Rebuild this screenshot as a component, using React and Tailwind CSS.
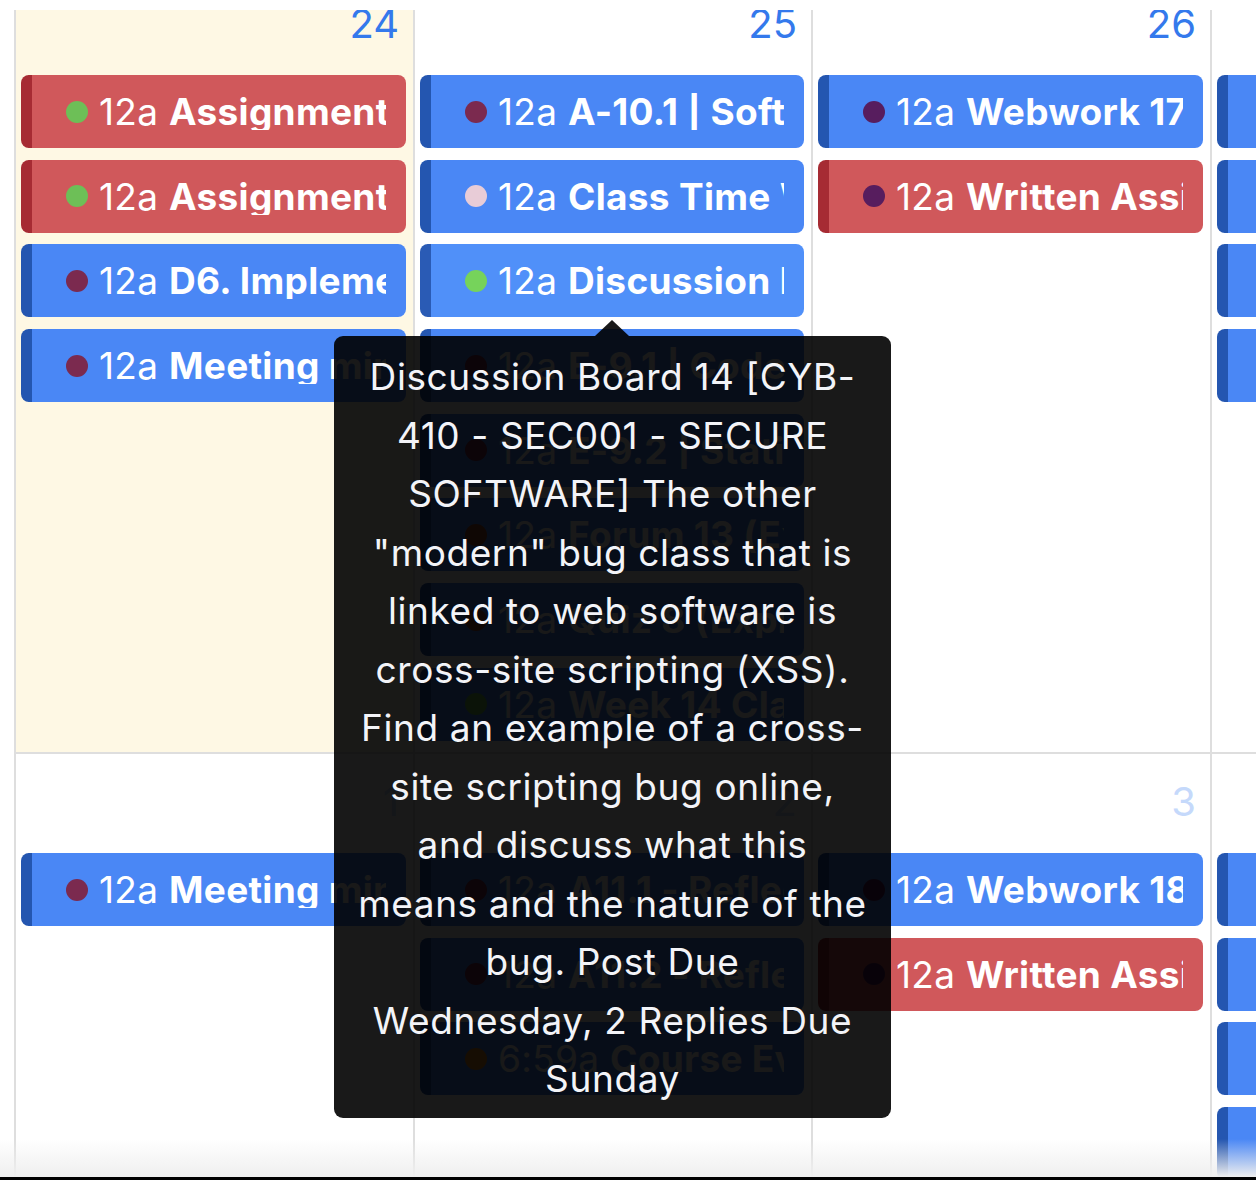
import React from 'react';

const BLUE = 'bg-[#4a87f5] border-[#2456b0]';
const BLUE_LIGHT = 'bg-[#5090f9] border-[#2a5bb5]';
const RED = 'bg-[#d0585b] border-[#a62b33]';

const DOT = {
    green: 'bg-[#6dbf57]',
    lime: 'bg-[#76d35b]',
    maroon: 'bg-[#7b2a4f]',
    purple: 'bg-[#571d5e]',
    pink: 'bg-[#e8ccd7]',
    orange: 'bg-[#e2801f]',
    brown: 'bg-[#9a4a2a]',
};

const weeks = [
    {
        height: 'h-[778px]',
        days: [
            {
                num: '24',
                today: true,
                events: [
                    { color: RED, dot: 'green', title: 'Assignment 13 (Secure Coding)' },
                    { color: RED, dot: 'green', title: 'Assignment 14 (Threat Model)' },
                    { color: BLUE, dot: 'maroon', title: 'D6. Implementation Plan' },
                    { color: BLUE, dot: 'maroon', title: 'Meeting minutes' },
                ],
            },
            {
                num: '25',
                events: [
                    { color: BLUE, dot: 'maroon', title: 'A-10.1 | Software Testing' },
                    { color: BLUE, dot: 'pink', title: 'Class Time Week 14' },
                    { color: BLUE_LIGHT, dot: 'lime', title: 'Discussion Board 14' },
                    { color: BLUE, dot: 'maroon', title: 'E-9.1 | Code Review' },
                    { color: BLUE, dot: 'maroon', title: 'E-9.2 | Static Analysis' },
                    { color: BLUE, dot: 'brown', title: 'Forum 13 (Extra)' },
                    { color: BLUE, dot: 'brown', title: 'Quiz 8 (Exploits)' },
                    { color: BLUE, dot: 'green', title: 'Week 14 Class Time' },
                ],
            },
            {
                num: '26',
                events: [
                    { color: BLUE, dot: 'purple', title: 'Webwork 17' },
                    { color: RED, dot: 'purple', title: 'Written Assignment 9' },
                ],
            },
            {
                num: '27',
                events: [
                    { color: BLUE, dot: 'maroon', title: 'Lab 12' },
                    { color: BLUE, dot: 'maroon', title: 'Lab 13' },
                    { color: BLUE, dot: 'maroon', title: 'Reading 14' },
                    { color: BLUE, dot: 'maroon', title: 'Reading 15' },
                ],
            },
        ],
    },
    {
        height: 'h-[430px]',
        days: [
            {
                num: '1',
                other: true,
                events: [{ color: BLUE, dot: 'maroon', title: 'Meeting minutes' }],
            },
            {
                num: '2',
                other: true,
                events: [
                    { color: BLUE, dot: 'maroon', title: 'A11.1 - Reflection' },
                    { color: BLUE, dot: 'maroon', title: 'A11.2 - Reflection' },
                    { color: BLUE, dot: 'orange', title: 'Course Evaluation', time: '6:59a' },
                ],
            },
            {
                num: '3',
                other: true,
                events: [
                    { color: BLUE, dot: 'purple', title: 'Webwork 18' },
                    { color: RED, dot: 'purple', title: 'Written Assignment 10' },
                ],
            },
            {
                num: '4',
                other: true,
                events: [
                    { color: BLUE, dot: 'maroon', title: 'Lab 14' },
                    { color: BLUE, dot: 'maroon', title: 'Lab 15' },
                    { color: BLUE, dot: 'maroon', title: 'Reading 16' },
                    { color: BLUE, dot: 'maroon', title: 'Reading 17' },
                ],
            },
        ],
    },
];

const tooltipLines = [
    'Discussion Board 14 [CYB-',
    '410 - SEC001 - SECURE',
    'SOFTWARE] The other',
    '"modern" bug class that is',
    'linked to web software is',
    'cross-site scripting (XSS).',
    'Find an example of a cross-',
    'site scripting bug online,',
    'and discuss what this',
    'means and the nature of the',
    'bug. Post Due',
    'Wednesday, 2 Replies Due',
    'Sunday',
];

const Event = ({ ev }) => (
    <div className={`h-[73px] shrink-0 rounded-[8px] border-l-[11px] flex items-center pl-[34px] pr-[20px] text-white ${ev.color}`}>
        <span className={`w-[22px] h-[22px] rounded-full shrink-0 ${DOT[ev.dot]}`} />
        <span className="ml-[11px] min-w-0 overflow-hidden whitespace-nowrap text-[37px] tracking-[0.3px] leading-none">
            <span className="font-normal">{ev.time || '12a'}</span>{' '}
            <span className="font-bold">{ev.title}</span>
        </span>
    </div>
);

const Day = ({ day }) => (
    <div className={`border-l-2 border-[#dedede] pl-[5px] pr-[7px] ${day.today ? 'bg-[#fef8e4]' : 'bg-white'}`}>
        <div className="h-[99px] pt-[28px] pr-[7px] text-right">
            <span className={`text-[40px] leading-[40px] ${day.other ? 'text-[#c5d9fb]' : 'text-[#3479ec]'}`}>{day.num}</span>
        </div>
        <div className="flex flex-col gap-[11.7px]">
            {day.events.map((ev, i) => (
                <Event key={i} ev={ev} />
            ))}
        </div>
    </div>
);

export default function App() {
    return (
        <div className="w-[1256px] h-[1180px] bg-white overflow-hidden relative font-[Inter,'Liberation_Sans',sans-serif]">
            <div className="h-[10px]" />
            <div className="relative h-[1167px] overflow-hidden pl-[14px]">
                <div className="-mt-[34px]">
                    {weeks.map((w, i) => (
                        <div
                            key={i}
                            className={`grid grid-cols-[399px_398px_399px_399px] w-[1595px] overflow-hidden ${w.height} ${i === 0 ? 'border-b-2 border-[#dedede]' : ''}`}
                        >
                            {w.days.map((d) => (
                                <Day key={d.num} day={d} />
                            ))}
                        </div>
                    ))}
                </div>
                <div className="absolute inset-x-0 bottom-0 h-[38px] bg-gradient-to-b from-white/0 to-[#efefef]" />
            </div>
            <div className="h-[3px] bg-black" />

            {/* tooltip */}
            <svg className="absolute left-[595px] top-[320px]" width="34" height="16" viewBox="0 0 34 16">
                <polygon points="17,0 34,16 0,16" fill="black" fillOpacity="0.9" />
            </svg>
            <div className="absolute left-[334px] top-[336px] w-[557px] h-[782px] rounded-[9px] bg-black/90 pt-[12px] text-center text-[37px] tracking-[0.6px] leading-[58.5px] text-[#f3f4f8]">
                {tooltipLines.map((l, i) => (
                    <div key={i} className="whitespace-nowrap">{l}</div>
                ))}
            </div>
        </div>
    );
}
